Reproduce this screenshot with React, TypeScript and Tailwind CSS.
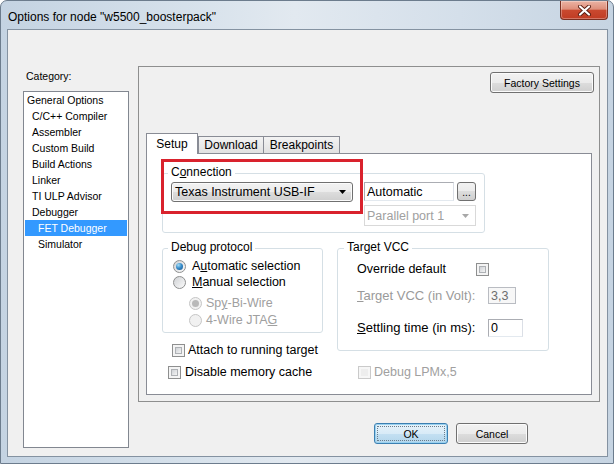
import React from "react";

const CATEGORIES = [
  { label: "General Options", indent: "pl-[2px]" },
  { label: "C/C++ Compiler", indent: "pl-[7px]" },
  { label: "Assembler", indent: "pl-[7px]" },
  { label: "Custom Build", indent: "pl-[7px]" },
  { label: "Build Actions", indent: "pl-[7px]" },
  { label: "Linker", indent: "pl-[7px]" },
  { label: "TI ULP Advisor", indent: "pl-[7px]" },
  { label: "Debugger", indent: "pl-[7px]" },
  { label: "FET Debugger", indent: "pl-[13px]", selected: true },
  { label: "Simulator", indent: "pl-[13px]" },
];

export default function App() {
  return (
    <div className="flex h-[464px] w-[614px] flex-col overflow-hidden rounded-t-[7px] border border-[#6c7c8d] bg-[linear-gradient(to_right,#c4d3e2_0%,#d6e1eb_30%,#e2e9f0_48%,#d4dfea_75%,#c6d4e2_100%)] font-['Liberation_Sans',Arial,sans-serif] text-black">
      {/* title bar */}
      <div className="flex h-[28px] items-start justify-between">
        <div className="pl-[7px] pt-[9px] text-[12px] leading-[14px]">
          Options for node "w5500_boosterpack"
        </div>
        <CloseButton />
      </div>

      {/* client area */}
      <div className="ml-[6px] mr-[5px] flex h-[428px] border border-[#8492a1] bg-[#f0f0f0]">
        {/* category column */}
        <div className="pl-[15px] pt-[40px]">
          <div className="mb-[8px] pl-[3px] text-[10.5px] leading-[13px]">Category:</div>
          <div className="h-[357px] w-[106px] border border-[#828790] bg-white">
            {CATEGORIES.map((c) => (
              <div
                key={c.label}
                className={`mx-[1px] h-[16px] whitespace-nowrap text-[10.5px] leading-[16px] ${c.indent} ${
                  c.selected ? "bg-[#3399ff] text-white" : ""
                }`}
              >
                {c.label}
              </div>
            ))}
          </div>
        </div>

        {/* options column */}
        <div className="ml-[9px] pt-[36px]">
          <div className="flex h-[336px] w-[462px] flex-col border border-[#8e8f8f]">
            <WinButton className="ml-auto mr-[5px] mt-[5px] w-[104px]">Factory Settings</WinButton>

            {/* tabs */}
            <div className="ml-[7px] mt-[40px] flex h-[20px] items-end text-[12px]">
              <div className="relative z-10 -mb-px flex h-[21px] w-[52px] items-center justify-center border border-b-0 border-[#898c95] bg-white">
                Setup
              </div>
              <div className="flex h-[17px] w-[66px] items-center justify-center border border-b-0 border-[#898c95] bg-gradient-to-b from-[#f3f3f3] to-[#e1e1e1]">
                Download
              </div>
              <div className="flex h-[17px] w-[76px] items-center justify-center border border-b-0 border-l-0 border-[#898c95] bg-gradient-to-b from-[#f3f3f3] to-[#e1e1e1]">
                Breakpoints
              </div>
            </div>

            {/* tab page */}
            <div className="relative mx-[7px] h-[242px] border border-[#898c95] bg-white pl-[15px] pt-[11px] text-[12.5px]">
              <div className="pointer-events-none absolute left-[14px] top-[5px] z-10 h-[55px] w-[202px] border-[3px] border-[#d9222d]" />

              <fieldset className="min-w-0 w-[323px] rounded-[3px] border border-[#d5dfe5] pb-[6px] pl-[5px] pr-[8px]">
                <legend className="px-[3px] pb-[3px] text-[12px] leading-[14px]">
                  C<u>o</u>nnection
                </legend>
                <div className="flex items-start">
                  <div className="ml-[3px] flex h-[20px] w-[182px] items-center justify-between rounded-[3px] border border-[#707070] bg-[linear-gradient(to_bottom,#f2f2f2_0%,#ebebeb_50%,#dddddd_50%,#cfcfcf_100%)] pl-[3px] pr-[6px] shadow-[inset_0_0_0_1px_#fbfbfb]">
                    <span className="leading-[14px]">Texas Instrument USB-IF</span>
                    <Arrow color="#000" />
                  </div>
                  <div className="ml-[11px] flex h-[19px] w-[90px] items-center border border-[#abadb3] border-b-[#e3e9ef] border-r-[#dbdfe6] bg-white pl-[2px] leading-[14px]">
                    Automatic
                  </div>
                  <div className="ml-[3px] flex h-[19px] w-[19px] items-end justify-center rounded-[3px] border border-[#707070] bg-[linear-gradient(to_bottom,#f2f2f2_0%,#ebebeb_50%,#dddddd_50%,#cfcfcf_100%)] pb-[2px] text-[10px] leading-[10px]">
                    ...
                  </div>
                </div>
                <div className="ml-[196px] mt-[3px] flex h-[21px] w-[112px] items-center justify-between border border-[#d9d9d9] bg-white pl-[2px] pr-[6px] text-[#a0a0a0]">
                  <span className="leading-[14px]">Parallel port 1</span>
                  <Arrow color="#a8a8a8" />
                </div>
              </fieldset>

              <div className="mt-[7px] flex items-start">
                {/* left column */}
                <div className="w-[161px]">
                  <fieldset className="min-w-0 w-[161px] rounded-[3px] border border-[#d5dfe5] pb-[3px] pl-[5px] pt-[1px]">
                    <legend className="px-[3px] pb-[3px] text-[12px] leading-[14px]">Debug protocol</legend>
                    <div className="ml-[5px] flex h-[16px] items-center gap-[6px]">
                      <Radio checked />
                      <span>
                        A<u>u</u>tomatic selection
                      </span>
                    </div>
                    <div className="ml-[5px] flex h-[16px] items-center gap-[6px]">
                      <Radio />
                      <span>
                        <u>M</u>anual selection
                      </span>
                    </div>
                    <div className="ml-[21px] mt-[5px] flex h-[17px] items-center gap-[4px] text-[#a0a0a0]">
                      <Radio checked disabled />
                      <span>
                        Sp<u>y</u>-Bi-Wire
                      </span>
                    </div>
                    <div className="ml-[21px] flex h-[17px] items-center gap-[4px] text-[#a0a0a0]">
                      <Radio disabled />
                      <span>
                        4-Wire JTA<u>G</u>
                      </span>
                    </div>
                  </fieldset>
                  <div className="ml-[10px] mt-[9px] flex h-[16px] items-center gap-[3px] whitespace-nowrap">
                    <Check />
                    <span>Attach to running target</span>
                  </div>
                  <div className="ml-[6px] mt-[6px] flex h-[16px] items-center gap-[4px] whitespace-nowrap">
                    <Check />
                    <span>Disable memory cache</span>
                  </div>
                </div>

                {/* right column */}
                <div className="ml-[14px] w-[212px]">
                  <fieldset className="min-w-0 w-[212px] rounded-[3px] border border-[#d5dfe5] pb-[13px] pl-[6px] pt-[4px]">
                    <legend className="px-[3px] pb-[3px] text-[12px] leading-[14px]">Target VCC</legend>
                    <div className="ml-[13px] flex h-[16px] items-center">
                      <span className="w-[119px] whitespace-nowrap">Override default</span>
                      <Check />
                    </div>
                    <div className="ml-[13px] mt-[10px] flex h-[17px] items-center text-[13px]">
                      <span className="w-[131px] whitespace-nowrap text-[#9a9a9a]">
                        <u>T</u>arget VCC (in Volt):
                      </span>
                      <div className="flex h-[17px] w-[28px] items-center border border-[#b9bcc2] bg-[#f7f7f7] pl-[2px] text-[12.5px] leading-[14px] text-[#6d6d6d]">
                        3,3
                      </div>
                    </div>
                    <div className="ml-[13px] mt-[15px] flex h-[18px] items-center text-[13px]">
                      <span className="w-[131px] whitespace-nowrap">
                        <u>S</u>ettling time (in ms):
                      </span>
                      <div className="flex h-[18px] w-[35px] items-center border border-[#abadb3] border-b-[#e3e9ef] border-r-[#dbdfe6] bg-white pl-[2px] text-[12.5px] leading-[14px]">
                        0
                      </div>
                    </div>
                  </fieldset>
                  <div className="ml-[21px] mt-[13px] flex h-[16px] items-center gap-[3px] whitespace-nowrap text-[#a0a0a0]">
                    <Check disabled />
                    <span>Debug LPMx,5</span>
                  </div>
                </div>
              </div>
            </div>
          </div>

          {/* dialog buttons */}
          <div className="mt-[21px] flex justify-end gap-[8px] pr-[72px]">
            <WinButton primary className="w-[74px]">
              OK
            </WinButton>
            <WinButton className="w-[72px]">Cancel</WinButton>
          </div>
        </div>
      </div>
    </div>
  );
}

function WinButton({
  children,
  className = "",
  primary = false,
}: {
  children: React.ReactNode;
  className?: string;
  primary?: boolean;
}) {
  return (
    <div
      className={`flex h-[21px] items-center justify-center rounded-[3px] border text-[10.5px] leading-[12px] ${
        primary
          ? "border-[#3c7fb1] bg-[linear-gradient(to_bottom,#e6f2fa_0%,#d8ebf7_50%,#c4e0f2_50%,#b3d6ec_100%)] shadow-[inset_0_0_0_1px_#9ad1ef] outline-1 outline-offset-[-4px] outline-dotted outline-[#6a7d8c]"
          : "border-[#707070] bg-[linear-gradient(to_bottom,#f2f2f2_0%,#ebebeb_50%,#dddddd_50%,#cfcfcf_100%)] shadow-[inset_0_0_0_1px_#fbfbfb]"
      } ${className}`}
    >
      {children}
    </div>
  );
}

function Check({ disabled = false }: { disabled?: boolean }) {
  return (
    <span
      className={`box-border inline-block h-[13px] w-[13px] shrink-0 border p-[2px] ${
        disabled ? "border-[#cacaca] bg-[#f6f6f6]" : "border-[#8e8f8f] bg-[#f4f4f4]"
      }`}
    >
      <span
        className={`block h-full w-full ${
          disabled ? "bg-[#ededed]" : "border border-[#aeb1b5] bg-gradient-to-br from-[#cfd2d6] to-[#f4f4f4]"
        }`}
      />
    </span>
  );
}

function Radio({ checked = false, disabled = false }: { checked?: boolean; disabled?: boolean }) {
  return (
    <span
      className={`inline-flex h-[13px] w-[13px] shrink-0 items-center justify-center rounded-full border ${
        disabled
          ? "border-[#c6c6c6] bg-[#f1f1f1]"
          : "border-[#8e8f8f] bg-gradient-to-br from-[#d0d2d5] to-[#fbfbfb]"
      }`}
    >
      {checked && (
        <span
          className={`h-[7px] w-[7px] rounded-full ${
            disabled
              ? "bg-[#b9b9b9]"
              : "bg-[radial-gradient(circle_at_35%_30%,#a7def7_0%,#3b8fcb_45%,#13508d_100%)]"
          }`}
        />
      )}
    </span>
  );
}

function Arrow({ color }: { color: string }) {
  return (
    <svg width="7" height="4" viewBox="0 0 7 4">
      <path d="M0 0h7L3.5 4z" fill={color} />
    </svg>
  );
}

function CloseButton() {
  return (
    <div className="mr-[5px] flex h-[19px] w-[48px] items-center justify-center rounded-b-[4px] border border-t-0 border-[#7a3022] bg-[linear-gradient(to_bottom,#ebb3a4_0%,#de8f7b_45%,#c9492f_52%,#c03c23_100%)] shadow-[inset_0_0_0_1px_rgba(255,255,255,0.3)]">
      <svg width="15" height="11" viewBox="0 0 15 11">
        <path d="M3 1.5l9 8M12 1.5l-9 8" stroke="#5a1f14" strokeWidth="4" strokeLinecap="round" />
        <path d="M3 1.5l9 8M12 1.5l-9 8" stroke="#ffffff" strokeWidth="2.2" strokeLinecap="round" />
      </svg>
    </div>
  );
}
